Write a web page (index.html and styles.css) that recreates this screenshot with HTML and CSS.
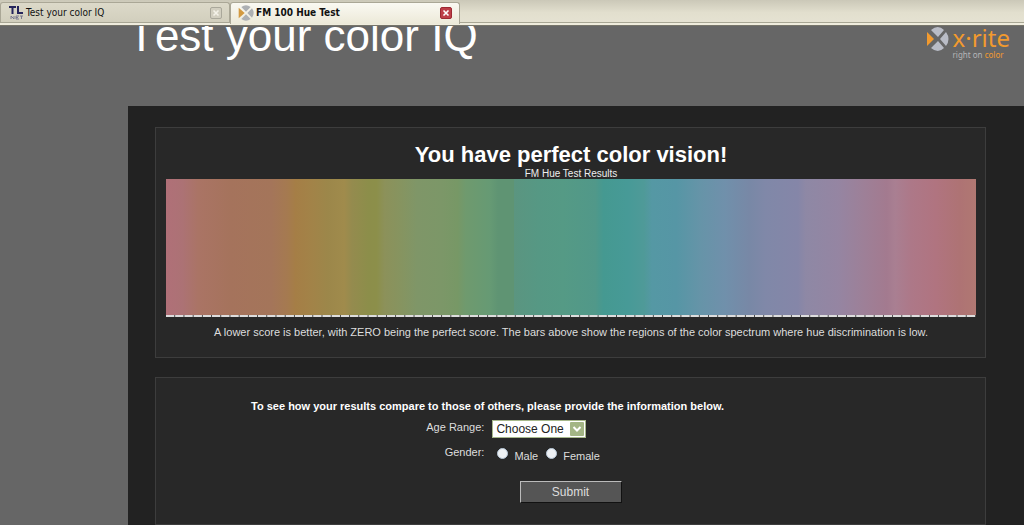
FILE: index.html
```html
<!DOCTYPE html>
<html lang="en">
<head>
<meta charset="utf-8">
<title>FM 100 Hue Test</title>
<link rel="stylesheet" href="styles.css">
</head>
<body>
<nav class="tabs">
  <div class="tab">
    <svg class="tab-icon" viewBox="0 0 16 16" aria-hidden="true">
      <path d="M1 2H8M4.500 2V9M10 1V8H15" fill="none" stroke="#25255c" stroke-width="2"/>
      <path d="M3 14V11L6 14V11M11 11H8V14H11M8 12.500H10M12 11H15M13.500 11V14" fill="none" stroke="#7b7b90" stroke-width="1"/>
    </svg>
    <a class="tab-title" href="#">Test your color IQ</a>
    <button class="tab-close" type="button" aria-label="Close tab"><svg viewBox="0 0 10 10"><path d="M2.500 2.500L7.500 7.500M7.500 2.500L2.500 7.500" stroke="currentColor" stroke-width="1.600"/></svg></button>
  </div>
  <div class="tab tab-active">
    <svg class="tab-icon" viewBox="0 0 24 24" aria-hidden="true">
      <path d="M5 3Q12-2 19 3L12 10Z M5 21Q12 26 19 21L12 14Z M21 5Q26 12 21 19L14 12Z" fill="#adb0b3"/>
      <path d="M1 4L10 12L1 20Z" fill="#d39a40"/>
    </svg>
    <a class="tab-title" href="#">FM 100 Hue Test</a>
    <button class="tab-close" type="button" aria-label="Close tab"><svg viewBox="0 0 10 10"><path d="M2.500 2.500L7.500 7.500M7.500 2.500L2.500 7.500" stroke="currentColor" stroke-width="1.600"/></svg></button>
  </div>
</nav>
<header class="banner">
  <h1 class="banner-title">Test your color IQ</h1>
  <div class="brand">
    <svg class="brand-mark" viewBox="0 0 24 26" aria-hidden="true">
      <path d="M5 4Q12-2 18 4L12 11Z M5 22Q12 28 18 22L12 15Z M20 6Q25 13 20 20L14 13Z" fill="#b9bcc6"/>
      <path d="M1 6Q4 9 8 13Q4 17 1 20Z" fill="#f29a2e"/>
    </svg>
    <div class="brand-text">
      <span class="brand-name">x·rite</span>
      <span class="brand-tag">right on <span class="brand-accent">color</span></span>
    </div>
  </div>
</header>
<main class="content">
  <section class="panel results">
    <h2 class="results-title">You have perfect color vision!</h2>
    <p class="results-caption">FM Hue Test Results</p>
    <div class="spectrum" role="img" aria-label="Color spectrum"></div>
    <div class="ticks"></div>
    <p class="results-note">A lower score is better, with ZERO being the perfect score. The bars above show the regions of the color spectrum where hue discrimination is low.</p>
  </section>
  <form class="panel compare">
    <p class="compare-title">To see how your results compare to those of others, please provide the information below.</p>
    <div class="row">
      <label class="row-label" for="age">Age Range:</label>
      <div class="select-box">
        <select class="select" id="age"><option>Choose One</option></select>
        <svg class="select-arrow" viewBox="0 0 14 14" aria-hidden="true"><rect width="14" height="14" rx="1" fill="#a3b585"/><path d="M3.500 5L7 8.500L10.500 5" fill="none" stroke="#fff" stroke-width="2"/></svg>
      </div>
    </div>
    <div class="row" role="radiogroup" aria-labelledby="gender">
      <span class="row-label" id="gender">Gender:</span>
      <div class="choices">
        <label class="choice"><input class="radio" type="radio" name="gender">Male</label>
        <label class="choice"><input class="radio" type="radio" name="gender">Female</label>
      </div>
    </div>
    <button class="submit" type="submit">Submit</button>
  </form>
</main>
</body>
</html>
```
FILE: styles.css
```css
* { box-sizing: border-box; }
body {
  margin: 0;
  min-height: 100vh;
  display: flex;
  flex-direction: column;
  background: #666;
  color: #ddd;
  font: 11px/14px "Liberation Sans", Arial, sans-serif;
  overflow: hidden;
}
h1, h2, p { margin: 0; }

.tabs {
  display: flex;
  height: 26px;
  padding-bottom: 3px;
  background: linear-gradient(#cbc8b8, #e2dfce 50%, #e6e3d3);
  border-bottom: 1px solid #77756a;
  box-shadow: inset 0 -2px #efecdd, inset 0 -3px #a8a694;
  flex: none;
}
.tab {
  display: flex;
  align-items: center;
  width: 230px;
  margin-top: 2px;
  padding: 0 7px;
  border: 1px solid #aaa796;
  border-bottom: 0;
  border-radius: 3px 3px 0 0;
  background: linear-gradient(#dcd9c9, #d2cfbd);
}
.tab-active {
  background: linear-gradient(#faf9f2, #ece9d8);
  margin-bottom: -2px;
  padding-bottom: 2px;
  font-weight: bold;
}
.tab-icon { width: 16px; height: 16px; margin-right: 2px; flex: none; }
.tab-title {
  flex: 1;
  color: #111;
  text-decoration: none;
  font-family: "DejaVu Sans Condensed", "DejaVu Sans", sans-serif;
  font-size: 10px;
}
.tab-close {
  width: 12px;
  height: 12px;
  padding: 0;
  border: 1px solid #aaa89b;
  border-radius: 2px;
  background: #d2cfc0;
  color: #f4f2e8;
  display: block;
}
.tab-close svg { display: block; width: 10px; height: 10px; }
.tab-active .tab-close { background: #bd3f48; border-color: #9d2933; color: #fff; }

.banner {
  display: flex;
  justify-content: space-between;
  height: 80px;
  padding: 0 14px 0 128px;
  overflow: hidden;
}
.banner-title {
  margin-top: -14px;
  font-size: 44px;
  line-height: 48px;
  font-weight: normal;
  font-kerning: none;
  color: #fff;
}
.brand { display: flex; gap: 3px; }
.brand-mark { width: 24px; height: 26px; }
.brand-text { display: flex; flex-direction: column; font-family: "Noto Sans", sans-serif; }
.brand-name { color: #f29a2e; font-size: 24px; line-height: 23px; }
.brand-tag { color: #b5b5b8; font-size: 8px; line-height: 11px; }
.brand-accent { color: #f29a2e; }

.content {
  flex: 1;
  display: flex;
  flex-direction: column;
  gap: 19px;
  margin-left: 128px;
  padding: 21px 38px 0 27px;
  background: #222;
}
.panel { border: 1px solid #3d3d3d; background: #282828; }
.results { padding: 13px 9px 18px 10px; text-align: center; }
.results-title { font-size: 22px; line-height: 27px; color: #fff; }
.results-caption { font-size: 10px; line-height: 11px; color: #eee; }
.spectrum {
  height: 136px;
  background: linear-gradient(90deg,
    #b07078 0%, #ac7275 2%, #aa7465 4%, #a5735c 8%, #a4755a 13%,
    #a57a50 15%, #a57e46 16%, #a28348 18%, #9c874a 20%, #a08b4c 22%,
    #948b4e 23%, #8c8e4a 25%, #8c8f4a 26%, #8c915a 27%, #869460 29%,
    #7f9668 31%, #7c9768 34%, #779866 36%, #6f9a6e 37%, #669a74 40%,
    #5f9473 41%, #5f9473 43%, #5b9580 43%, #569884 46%, #559a85 49%,
    #519889 53%, #459991 54%, #479a97 57%, #4f9a98 59%, #5598a4 60%,
    #5696a5 63%, #6694a8 66%, #7090ab 69%, #7888a6 72%, #8088a8 74%,
    #8586a8 78%, #8e88a5 79%, #9585a2 83%, #9d8098 86%, #a37a8f 89%,
    #a97f92 90%, #ad7888 92%, #b07480 95%, #ae7374 98%, #b07872 100%);
}
.ticks {
  height: 2px;
  background: linear-gradient(90deg, #ddd 88%, #444 88%) 0 0 / calc(100% / 88) 100%;
}
.results-note { margin-top: 8px; }

.compare { flex: 1; padding-top: 21px; }
.compare-title { width: 80%; text-align: center; font-weight: bold; color: #fff; }
.row {
  display: grid;
  grid-template-columns: 2fr 3fr;
  column-gap: 8px;
  margin-top: 7px;
}
.row-label { text-align: right; }
.select-box { position: relative; width: 94px; height: 18px; }
.select {
  appearance: none;
  width: 100%;
  height: 100%;
  padding: 0 16px 0 3px;
  border: 1px solid #a7b88b;
  border-radius: 0;
  background: #fff;
  color: #222;
  font: 12px/16px "Liberation Sans", Arial, sans-serif;
}
.select-arrow { position: absolute; top: 2px; right: 2px; width: 14px; height: 14px; pointer-events: none; }
.choices { display: flex; gap: 8px; padding: 3px 0 0 5px; }
.choice { display: flex; gap: 6px; line-height: 16px; }
.radio {
  appearance: none;
  width: 11px;
  height: 11px;
  margin: 0;
  border: 1px solid #b8c8d8;
  border-radius: 50%;
  background: #eef1f4;
}
.submit {
  display: block;
  width: 102px;
  height: 22px;
  margin: 17px auto 0;
  padding: 0;
  border: 1px solid;
  border-color: #bbb #111 #111 #bbb;
  background: #555;
  color: #ddd;
  font: 12px/18px "Liberation Sans", Arial, sans-serif;
}
```
